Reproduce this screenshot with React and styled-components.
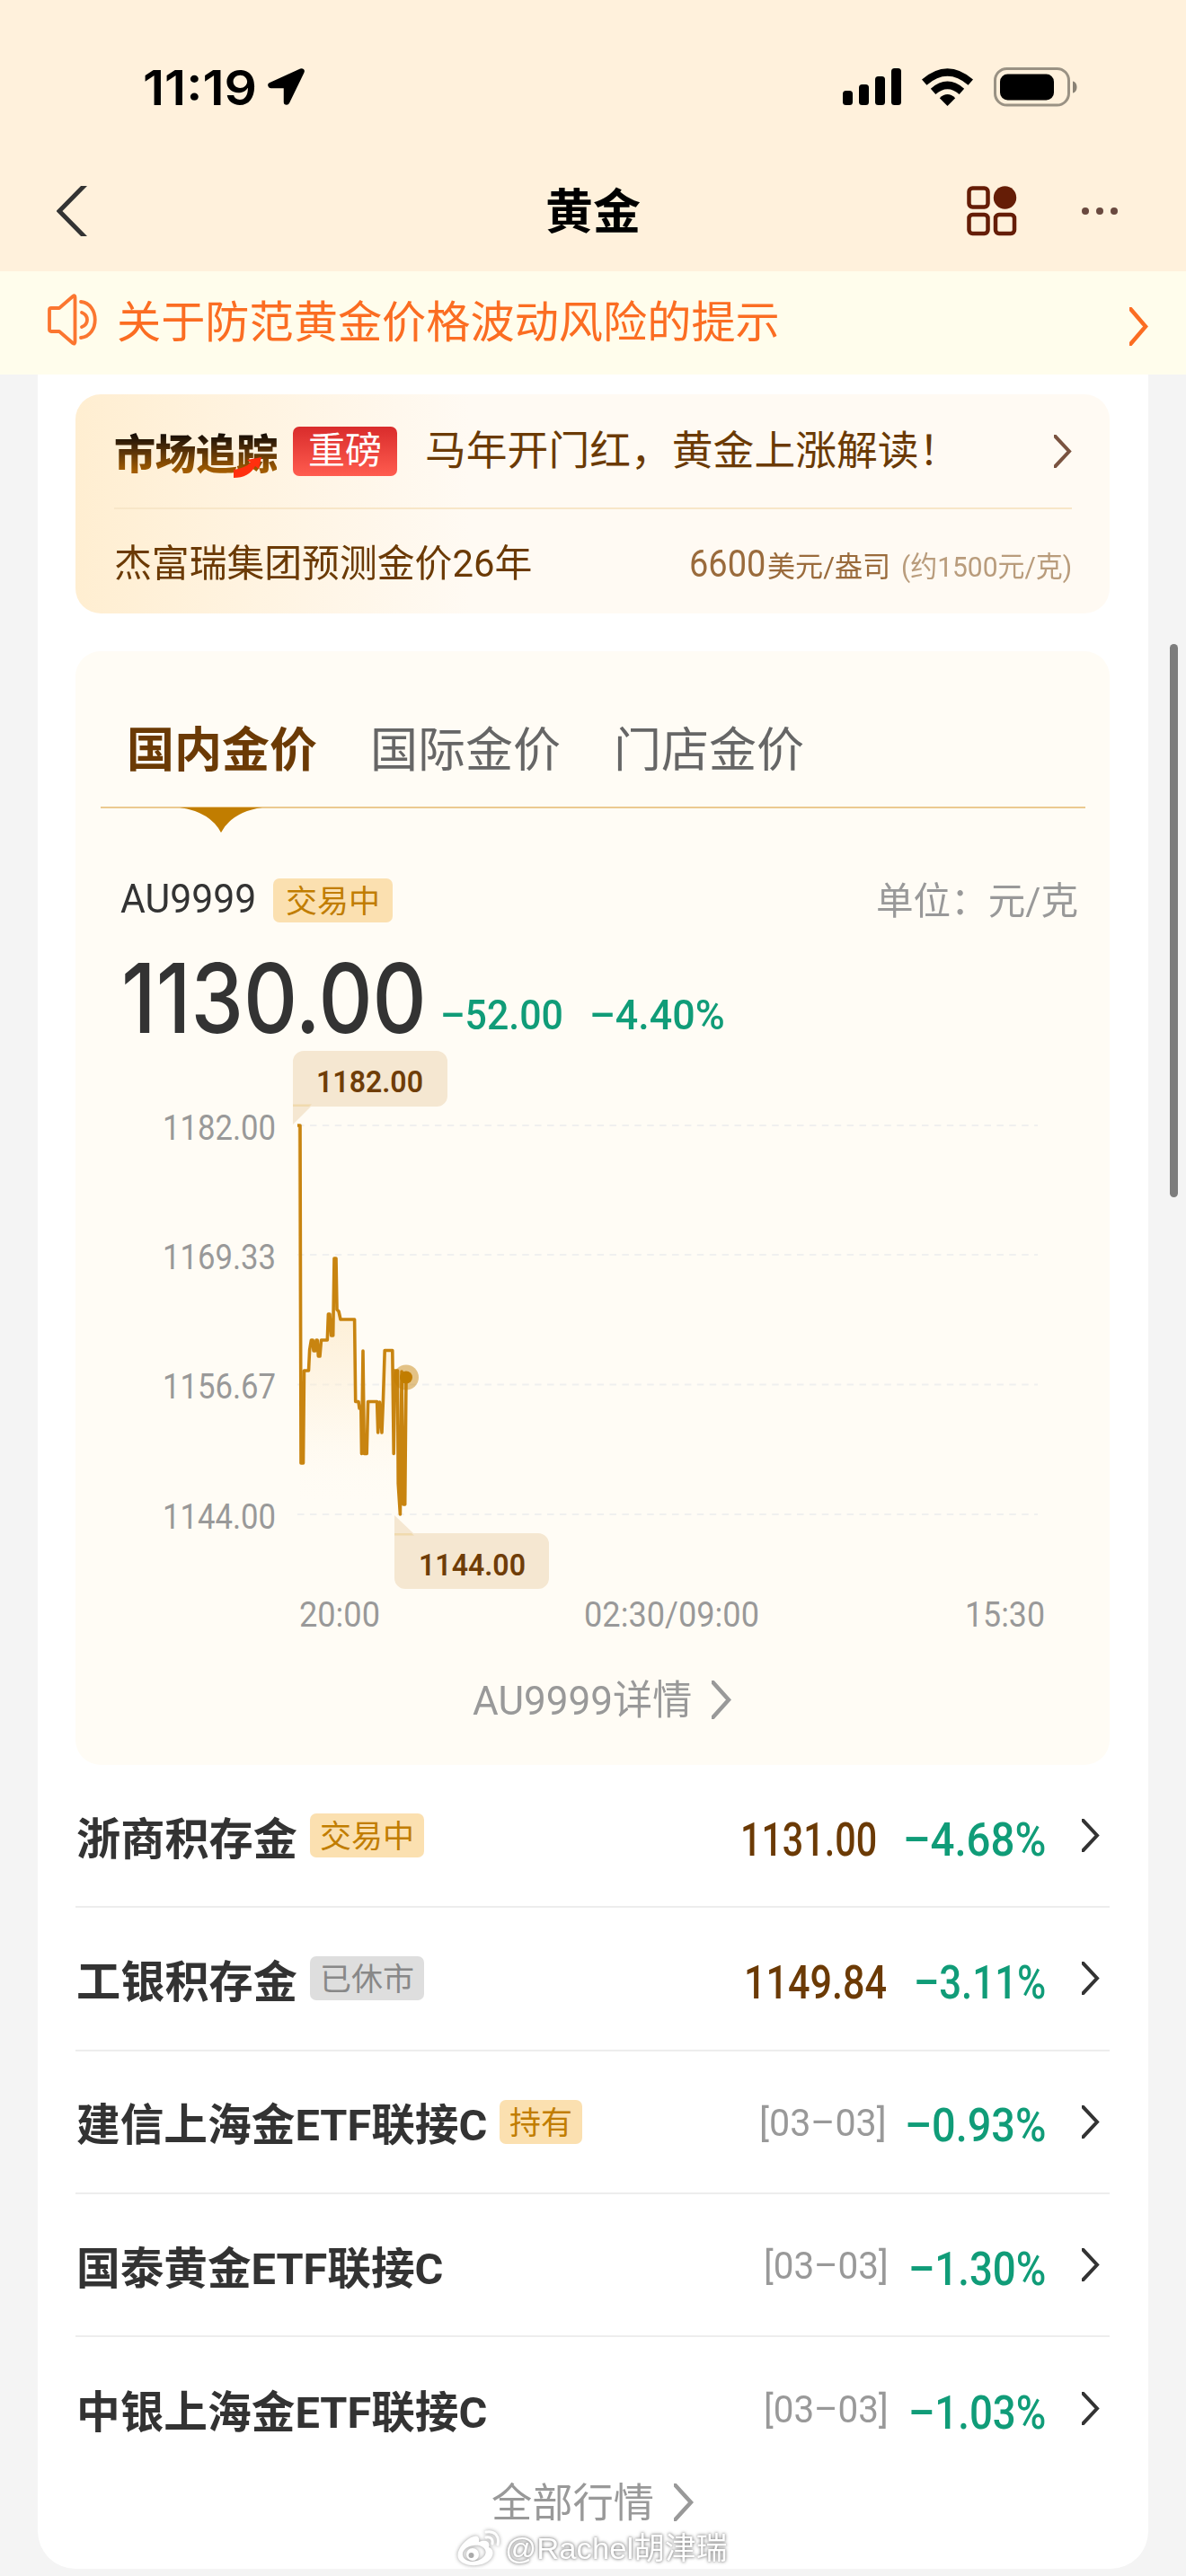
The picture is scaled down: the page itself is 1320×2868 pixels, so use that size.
import React, { useLayoutEffect, useRef, useState } from "react";
import styled, { createGlobalStyle, css } from "styled-components";

const GlobalStyle = createGlobalStyle`
  * {
    box-sizing: border-box;
  }
  body {
    margin: 0;
    background: #f4f4f4;
    font-family: Roboto, "Noto Sans CJK SC", sans-serif;
    line-height: 1;
    color: #333;
  }
  svg {
    display: block;
    flex: none;
  }
`;

const Page = styled.div`
  position: relative;
  width: 1320px;
  height: 2868px;
  overflow: hidden;
  background: #f4f4f4;
`;

/* text squeezed or stretched to a fixed width */
const FitBox = styled.span`
  display: inline-block;
  flex: none;
  width: ${({ $w }) => $w}px;
  white-space: nowrap;
`;
const FitInner = styled.span`
  display: inline-block;
  transform-origin: 0 50%;
`;

const Fit = ({ w, children }) => {
  const ref = useRef(null);
  const [scale, setScale] = useState(1);

  useLayoutEffect(() => {
    setScale(w / ref.current.offsetWidth);
  }, [w, children]);

  return (
    <FitBox $w={w}>
      <FitInner ref={ref} style={{ transform: `scaleX(${scale})` }}>
        {children}
      </FitInner>
    </FitBox>
  );
};

const Chevron = ({ w = 20, h = 37, color = "#333", stroke = 4 }) => (
  <svg width={w} height={h} viewBox={`0 0 ${w} ${h}`}>
    <path
      d={`M-3 -3L${w - 3} ${h / 2}L-3 ${h + 3}`}
      fill="none"
      stroke={color}
      strokeWidth={stroke}
    />
  </svg>
);

/* ---------- header ---------- */
const Header = styled.header`
  height: 302px;
  background: #fff1dc;
`;
const StatusBar = styled.div`
  display: flex;
  align-items: center;
  justify-content: space-between;
  height: 193px;
  padding: 0 121px 0 159px;
`;
const StatusLeft = styled.div`
  display: flex;
  align-items: center;
  gap: 11px;
`;
const Clock = styled.div`
  font-family: Inter, sans-serif;
  font-size: 53px;
  font-weight: 600;
  color: #000;
  padding-top: 3px;
`;
const StatusIcons = styled.div`
  display: flex;
  align-items: center;
  gap: 23px;
`;
const NavBar = styled.div`
  display: flex;
  align-items: center;
  justify-content: space-between;
  height: 84px;
  padding: 0 76px 0 63px;
`;
const NavSide = styled.div`
  display: flex;
  align-items: center;
  justify-content: ${({ $end }) => ($end ? "flex-end" : "flex-start")};
  gap: 72px;
  width: 200px;
`;
const NavTitle = styled.h1`
  margin: 0;
  padding: 4px 0 0 13px;
  font-size: 53px;
  font-weight: 600;
  color: #000;
`;

const Notice = styled.div`
  display: flex;
  align-items: center;
  height: 115px;
  padding: 0 42px 0 53px;
  background: #fffdec;
  color: #fb6d22;
`;
const NoticeIcon = styled.div`
  padding-bottom: 8px;
`;
const NoticeText = styled.div`
  flex: 1;
  margin-left: 22px;
  padding-top: 1px;
  font-size: 49.2px;
`;
const NoticeArrow = styled.div`
  padding-top: 7px;
`;

/* ---------- panel and cards ---------- */
const Panel = styled.main`
  height: 2443px;
  margin: 0 42px;
  padding: 22px 43px 0 42px;
  background: #fff;
  border-radius: 0 0 42px 42px;
`;

const NewsCard = styled.section`
  height: 244px;
  margin-bottom: 42px;
  padding: 0 42px 0 43px;
  border-radius: 28px;
  background: linear-gradient(90deg, #ffeed1 0%, #fff5e5 22%, #fffaf3 38%);
  color: #6b3a05;
`;
const NewsTop = styled.div`
  display: flex;
  align-items: center;
  height: 128px;
  border-bottom: 2px solid #f8e6c8;
`;
const NewsLogo = styled.div`
  position: relative;
  width: 181px;
  margin-right: 18px;
  svg {
    position: absolute;
    right: 16px;
    bottom: 2px;
  }
`;
const LogoText = styled.div`
  font-family: "Noto Sans CJK SC", sans-serif;
  font-size: 46px;
  line-height: 64px;
  letter-spacing: -0.6px;
  font-weight: 900;
  white-space: nowrap;
  background: linear-gradient(180deg, #140c05 20%, #5b3408 52%, #a25c00 85%);
  -webkit-background-clip: text;
  background-clip: text;
  color: transparent;
`;
const HotTag = styled.div`
  display: flex;
  align-items: center;
  justify-content: center;
  width: 116px;
  height: 55px;
  margin-right: 31px;
  padding-top: 1px;
  border-radius: 7px;
  background: linear-gradient(180deg, #d92c2c, #ff5c4f);
  color: #fff;
  font-size: 41px;
`;
const NewsTitle = styled.div`
  flex: 1;
  padding-top: 2px;
  font-size: 45.8px;
`;
const NewsBottom = styled.div`
  display: flex;
  align-items: center;
  height: 116px;
  padding-top: 5px;
  font-size: 42px;
`;
const Forecast = styled.div`
  display: flex;
  align-items: baseline;
  margin-left: auto;
  color: #9a6b3c;
`;
const ForecastUnit = styled.span`
  margin-left: 2px;
  font-size: 32px;
`;
const ForecastNote = styled.span`
  margin-left: 12px;
  font-size: 32px;
  color: #b99c7c;
`;

const PriceCard = styled.section`
  height: 1240px;
  padding: 0 27px 0 28px;
  border-radius: 28px;
  background: #fffcf5;
`;
const Tabs = styled.div`
  display: flex;
  align-items: flex-start;
  gap: 59px;
  height: 175px;
  padding: 85px 0 0 29px;
  border-bottom: 2px solid #ecca90;
`;
const Tab = styled.div`
  position: relative;
  font-size: 53px;
  color: #666;
  ${({ $active }) =>
    $active &&
    css`
      color: #6b3a05;
      font-weight: 700;
    `}
  svg {
    position: absolute;
    left: 59px;
    top: 89px;
  }
`;
const InfoRow = styled.div`
  display: flex;
  align-items: center;
  height: 50px;
  margin-top: 77px;
  padding: 0 8px 0 22px;
  font-size: 45px;
`;
const InfoCode = styled.div`
  padding-bottom: 4px;
`;
const Unit = styled.div`
  margin-left: auto;
  padding-top: 4px;
  font-size: 42.5px;
  color: #999;
`;
const Tag = styled.div`
  display: flex;
  align-items: center;
  height: 49px;
  margin-left: ${({ $gap = 17 }) => $gap}px;
  padding: 4px ${({ $pad = 11 }) => $pad}px 0;
  border-radius: 7px;
  font-size: 35px;
  color: ${({ $muted }) => ($muted ? "#888" : "#c17d00")};
  background: ${({ $muted }) => ($muted ? "#dedede" : "#fbe0b0")};
`;
const PriceRow = styled.div`
  display: flex;
  align-items: center;
  height: 133px;
  padding: 35px 0 0 23px;
`;
const Price = styled.div`
  font-family: Inter, sans-serif;
  font-size: 107px;
  font-weight: 500;
`;
const Delta = styled.div`
  display: flex;
  gap: 29px;
  padding-top: 38px;
  margin-left: 15px;
  font-size: 46px;
  font-weight: 500;
  color: #109c78;
`;
const ChartSvg = styled.svg`
  margin-left: -28px;
  font-family: Roboto, sans-serif;
`;
const More = styled.div`
  display: flex;
  align-items: center;
  justify-content: center;
  gap: 22px;
  height: ${({ $h }) => $h}px;
  padding-left: ${({ $shift = 0 }) => $shift}px;
  font-size: 45px;
  color: #999;
`;
const MoreText = styled.div`
  padding-top: 3px;
`;

/* ---------- fund list ---------- */
const Row = styled.div`
  display: flex;
  align-items: center;
  height: 159.3px;
  padding: 0 11px 0 1px;
  border-bottom: ${({ $last }) => ($last ? "none" : "2px solid #ededed")};
`;
const Name = styled.div`
  padding-top: 9px;
  font-size: 49px;
  font-weight: 700;
`;
const Value = styled.div`
  margin-left: auto;
  padding-top: 9px;
  font-size: 51px;
  font-weight: 500;
  color: #6b3a05;
`;
const DateText = styled.div`
  margin-left: auto;
  padding-top: 2px;
  font-size: 43px;
  color: #999;
`;
const Percent = styled.div`
  margin-left: ${({ $gap }) => $gap}px;
  margin-right: 40px;
  padding-top: 9px;
  font-size: 51px;
  font-weight: 500;
  color: #109c78;
`;

const ScrollThumb = styled.div`
  position: absolute;
  top: 717px;
  right: 9px;
  width: 9px;
  height: 616px;
  border-radius: 5px;
  background: #7d7d7d;
`;
const Watermark = styled.div`
  position: absolute;
  left: 507px;
  top: 2815px;
  display: flex;
  align-items: center;
  gap: 5px;
  font-family: "Liberation Sans", "Noto Sans CJK SC", sans-serif;
  font-size: 34px;
  color: #fff;
  text-shadow: 0 0 3px #8a8a8a, 0 0 4px #999;
  svg {
    filter: drop-shadow(0 0 2px #999);
  }
`;

const funds = [
  {
    name: "浙商积存金",
    nameW: 246,
    tag: "交易中",
    value: "1131.00",
    valueW: 152,
    percent: "–4.68%",
    percentW: 159,
    gap: 29,
  },
  {
    name: "工银积存金",
    nameW: 246,
    tag: "已休市",
    muted: true,
    value: "1149.84",
    valueW: 159,
    percent: "–3.11%",
    percentW: 147,
    gap: 30,
  },
  {
    name: "建信上海金ETF联接C",
    nameW: 457,
    tag: "持有",
    date: "[03–03]",
    dateW: 142,
    percent: "–0.93%",
    percentW: 157,
    gap: 20,
  },
  {
    name: "国泰黄金ETF联接C",
    nameW: 408,
    date: "[03–03]",
    dateW: 139,
    percent: "–1.30%",
    percentW: 153,
    gap: 22,
  },
  {
    name: "中银上海金ETF联接C",
    nameW: 457,
    date: "[03–03]",
    dateW: 139,
    percent: "–1.03%",
    percentW: 153,
    gap: 22,
  },
];

const points = [
  [247, 93], [250, 93], [251, 469], [253.5, 469], [254.5, 366], [259.5, 366],
  [260.6, 343], [262.4, 332], [264.2, 332], [265, 344], [266.7, 344],
  [268, 332], [269.2, 332], [270.3, 350], [272, 350], [273.5, 332],
  [280.3, 332], [281.4, 303], [283, 303], [284.6, 327], [286.7, 327],
  [288, 241], [290, 241], [291, 298], [293, 300], [295, 309], [310.6, 309],
  [311.7, 400.5], [315, 400.5], [316, 408], [317.8, 408], [318.5, 458.5],
  [320, 344], [321.4, 458.5], [324.2, 458.5], [325.6, 400.5],
  [335.6, 400.5], [336.7, 435], [338.5, 401], [341, 435], [342.4, 400.5],
  [344.2, 343.5], [352.8, 343.5], [354.2, 458.5], [355.6, 366],
  [358.5, 366], [359.2, 492], [361.4, 526], [363.1, 367], [365, 515],
  [366.7, 515], [368, 374],
];
const line = points.map((p) => p.join(",")).join(" ");

const levels = [
  { y: 93, label: "1182.00" },
  { y: 237, label: "1169.33" },
  { y: 381.5, label: "1156.67" },
  { y: 526, label: "1144.00" },
];
const times = [
  { x: 250, w: 87, label: "20:00" },
  { x: 567, w: 192, label: "02:30/09:00" },
  { x: 991, w: 86, label: "15:30" },
];

const Chart = () => (
  <ChartSvg width="1151" height="680" viewBox="0 0 1151 680">
    <defs>
      <linearGradient id="area" x1="0" y1="0" x2="0" y2="1">
        <stop offset="0.35" stopColor="#fdebcd" />
        <stop offset="0.8" stopColor="#fdebcd" stopOpacity="0.15" />
        <stop offset="1" stopColor="#fff" stopOpacity="0" />
      </linearGradient>
    </defs>
    {levels.map(({ y, label }) => (
      <g key={label}>
        <line
          x1="247"
          x2="1071"
          y1={y}
          y2={y}
          stroke="#f0f0ef"
          strokeWidth="2"
          strokeDasharray="7.5 6.4"
        />
        <text
          x="97"
          y={y + 15.5}
          fontSize="38"
          fill="#999"
          textLength="126"
          lengthAdjust="spacingAndGlyphs"
        >
          {label}
        </text>
      </g>
    ))}
    <polygon points={`250,526 ${line} 368,526`} fill="url(#area)" />
    <polyline
      points={line}
      fill="none"
      stroke="#c88410"
      strokeWidth="3.6"
      strokeLinejoin="round"
    />
    <circle cx="368" cy="373.5" r="14" fill="#c17d00" fillOpacity="0.45" />
    <circle cx="368" cy="373.5" r="7" fill="#c17d00" />

    <path
      d="M242 22a12 12 0 0 1 12-12h148a12 12 0 0 1 12 12v38a12 12 0 0 1-12 12H262L242 92z"
      fill="#f5e7d1"
    />
    <path d="M242 69.5h21l-3 2.5h-18z" fill="#f0daae" />
    <path
      d="M355 527l21 20h139a12 12 0 0 1 12 12v38a12 12 0 0 1-12 12H367a12 12 0 0 1-12-12z"
      fill="#f5e7d1"
    />
    <path d="M355 547h19l3 2.5h-22z" fill="#f0daae" />
    <g fontSize="34" fontWeight="600" fill="#6f3d08">
      <text x="268" y="56" textLength="119" lengthAdjust="spacingAndGlyphs">
        1182.00
      </text>
      <text x="382" y="594" textLength="119" lengthAdjust="spacingAndGlyphs">
        1144.00
      </text>
    </g>
    {times.map(({ x, w, label }) => (
      <text
        key={label}
        x={x - 1}
        y="651"
        fontSize="38"
        fill="#999"
        textLength={w + 3}
        lengthAdjust="spacingAndGlyphs"
      >
        {label}
      </text>
    ))}
  </ChartSvg>
);

const App = () => {
  return (
    <>
      <GlobalStyle />
      <Page>
        <Header>
          <StatusBar>
            <StatusLeft>
              <Clock>
                <Fit w={127}>11:19</Fit>
              </Clock>
              <svg width="44" height="44" viewBox="0 0 44 44">
                <path
                  d="M38.5 4.5L4.5 20H22V38.5z"
                  stroke="#000"
                  strokeWidth="6.5"
                  strokeLinejoin="round"
                />
              </svg>
            </StatusLeft>
            <StatusIcons>
              <svg width="65" height="42" viewBox="0 0 65 42">
                <rect x="0" y="25" width="11" height="16" rx="3.5" />
                <rect x="18" y="18" width="11" height="23" rx="3.5" />
                <rect x="36" y="9" width="11" height="32" rx="3.5" />
                <rect x="54" y="0" width="11" height="41" rx="3.5" />
              </svg>
              <svg width="57" height="42" viewBox="0 0 57 42">
                <path d="M28.5 42L19.8 33.2Q28.5 25 37.2 33.2z" />
                <g fill="none" stroke="#000" strokeWidth="8.4">
                  <path d="M12.6 25.8Q28.5 12 44.4 25.8" />
                  <path d="M2.7 15.6Q28.5 -6.6 54.3 15.6" />
                </g>
              </svg>
              <svg width="93" height="44" viewBox="0 0 93 44">
                <rect
                  x="1.5"
                  y="1.5"
                  width="82"
                  height="40.5"
                  rx="13"
                  fill="none"
                  stroke="#9a9284"
                  strokeWidth="3"
                />
                <rect x="7" y="7.5" width="60" height="29" rx="8.5" />
                <path d="M88 15.5c6 1 6 12 0 13z" fill="#8a8275" />
              </svg>
            </StatusIcons>
          </StatusBar>
          <NavBar>
            <NavSide>
              <svg width="34" height="56" viewBox="0 0 34 56">
                <path
                  d="M33 -2.5L3 28L33 58.5"
                  fill="none"
                  stroke="#333"
                  strokeWidth="5"
                />
              </svg>
            </NavSide>
            <NavTitle>黄金</NavTitle>
            <NavSide $end>
              <svg width="56" height="56" viewBox="0 0 56 56">
                <g fill="none" stroke="#651d06" strokeWidth="4.5">
                  <rect x="2.5" y="2.5" width="21" height="21" rx="4" />
                  <rect x="2.5" y="32" width="21" height="21" rx="4" />
                  <rect x="32" y="32" width="21" height="21" rx="4" />
                </g>
                <circle cx="42.5" cy="13" r="12.7" fill="#651d06" />
              </svg>
              <svg width="40" height="8" viewBox="0 0 40 8" fill="#6a493f">
                <circle cx="4" cy="4" r="4" />
                <circle cx="20" cy="4" r="4" />
                <circle cx="36" cy="4" r="4" />
              </svg>
            </NavSide>
          </NavBar>
        </Header>

        <Notice>
          <NoticeIcon>
            <svg
              width="55"
              height="58"
              viewBox="0 0 55 58"
              fill="none"
              stroke="#fb7630"
              strokeWidth="3.8"
              strokeLinecap="round"
              strokeLinejoin="round"
            >
              <path d="M2 18Q2 16 4 16H13L28 3Q30.500 1 30.500 4V53Q30.500 57 28 55L13 42H4Q2 42 2 40z" />
              <path d="M37 9C58 11 58 47 37 49" />
              <path d="M38 21C46 24 46 34 38 37" />
            </svg>
          </NoticeIcon>
          <NoticeText>关于防范黄金价格波动风险的提示</NoticeText>
          <NoticeArrow>
            <Chevron w={21} h={43} color="#fb6d22" stroke={4.5} />
          </NoticeArrow>
        </Notice>

        <Panel>
          <NewsCard>
            <NewsTop>
              <NewsLogo>
                <LogoText>市场追踪</LogoText>
                <svg width="32" height="23" viewBox="0 0 32 23">
                  <path
                    d="M0 14Q13 12 19 6L15 3L31 0L28 13L24 10Q17 23 0 23z"
                    fill="#ff2f0e"
                  />
                </svg>
              </NewsLogo>
              <HotTag>重磅</HotTag>
              <NewsTitle>马年开门红，黄金上涨解读！</NewsTitle>
              <Chevron color="#7a5340" />
            </NewsTop>
            <NewsBottom>
              <Fit w={465}>杰富瑞集团预测金价26年</Fit>
              <Forecast>
                <Fit w={85}>6600</Fit>
                <ForecastUnit>
                  <Fit w={137}>美元/盎司</Fit>
                </ForecastUnit>
                <ForecastNote>
                  <Fit w={190}>(约1500元/克)</Fit>
                </ForecastNote>
              </Forecast>
            </NewsBottom>
          </NewsCard>

          <PriceCard>
            <Tabs>
              <Tab $active>
                国内金价
                <svg width="92" height="28" viewBox="0 0 92 28">
                  <path d="M0 0H92Q58 5 46 28Q34 5 0 0z" fill="#c17d00" />
                </svg>
              </Tab>
              <Tab>国际金价</Tab>
              <Tab>门店金价</Tab>
            </Tabs>
            <InfoRow>
              <InfoCode>
                <Fit w={151}>AU9999</Fit>
              </InfoCode>
              <Tag $gap={19} $pad={14}>
                交易中
              </Tag>
              <Unit>
                <Fit w={225}>单位：元/克</Fit>
              </Unit>
            </InfoRow>
            <PriceRow>
              <Price>
                <Fit w={340}>1130.00</Fit>
              </Price>
              <Delta>
                <Fit w={137}>–52.00</Fit>
                <Fit w={151}>–4.40%</Fit>
              </Delta>
            </PriceRow>
            <Chart />
            <More $h={104} $shift={20}>
              <MoreText>
                <Fit w={244}>AU9999详情</Fit>
              </MoreText>
              <Chevron w={22} h={43} color="#999" stroke={4.5} />
            </More>
          </PriceCard>

          {funds.map((fund, i) => (
            <Row key={fund.name} $last={i === funds.length - 1}>
              <Name>
                <Fit w={fund.nameW}>{fund.name}</Fit>
              </Name>
              {fund.tag && (
                <Tag $gap={14} $muted={fund.muted}>
                  {fund.tag}
                </Tag>
              )}
              {fund.value ? (
                <Value>
                  <Fit w={fund.valueW}>{fund.value}</Fit>
                </Value>
              ) : (
                <DateText>
                  <Fit w={fund.dateW}>{fund.date}</Fit>
                </DateText>
              )}
              <Percent $gap={fund.gap}>
                <Fit w={fund.percentW}>{fund.percent}</Fit>
              </Percent>
              <Chevron />
            </Row>
          ))}
          <More $h={50}>
            <MoreText>
              <Fit w={181}>全部行情</Fit>
            </MoreText>
            <Chevron w={22} h={42} color="#999" stroke={4.5} />
          </More>
        </Panel>

        <ScrollThumb />
        <Watermark>
          <svg width="50" height="44" viewBox="0 0 50 44" fill="#fff">
            <path
              fillRule="evenodd"
              d="M20 9C25 7 27 11 26 15C34 12 39 15 37 21C43 23 43 30 38 35C29 44 7 43 3 33C0 25 10 12 20 9zM20 19C12 20 7 25 8 30C9 36 17 38 24 36C31 34 35 29 33 24C31 20 26 18 20 19z"
            />
            <circle cx="19" cy="29" r="7" />
            <g
              fill="none"
              stroke="#fff"
              strokeWidth="3"
              strokeLinecap="round"
            >
              <path d="M34 4C44 2 49 9 47 18" />
              <path d="M34 10C39 9 42 12 41 17" />
            </g>
            <circle cx="17.5" cy="30" r="3" fill="#aaa" />
          </svg>
          <Fit w={247}>@Rachel胡津瑞</Fit>
        </Watermark>
      </Page>
    </>
  );
};

export default App;
